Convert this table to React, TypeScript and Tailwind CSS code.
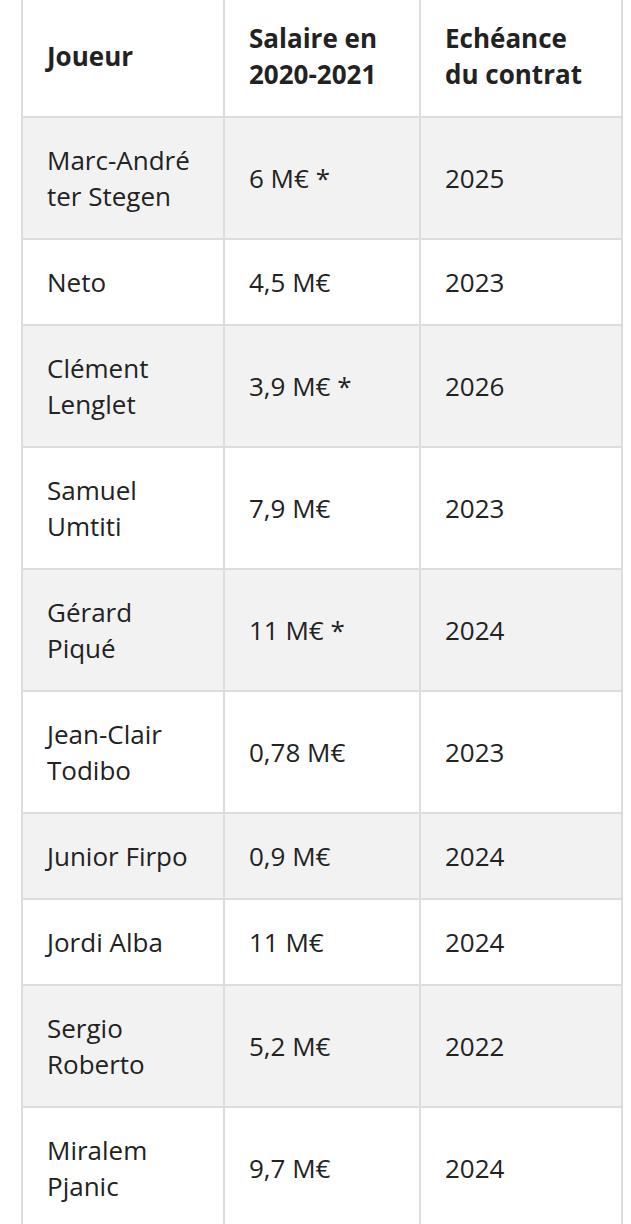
const rows: [string, string, string][] = [
  ["Marc-André ter Stegen", "6 M€ *", "2025"],
  ["Neto", "4,5 M€", "2023"],
  ["Clément Lenglet", "3,9 M€ *", "2026"],
  ["Samuel Umtiti", "7,9 M€", "2023"],
  ["Gérard Piqué", "11 M€ *", "2024"],
  ["Jean-Clair Todibo", "0,78 M€", "2023"],
  ["Junior Firpo", "0,9 M€", "2024"],
  ["Jordi Alba", "11 M€", "2024"],
  ["Sergio Roberto", "5,2 M€", "2022"],
  ["Miralem Pjanic", "9,7 M€", "2024"],
];

const cell = "border-l-2 border-t-2 border-[#dddddd] px-6 py-6 text-left align-middle";

export default function App() {
  return (
    <div className="min-h-screen bg-white overflow-hidden font-['Open_Sans',sans-serif] text-[26px] leading-[36px] text-[#222222]">
      {/* Salary table */}
      <table className="-mt-[6px] ml-[21px] w-[600px] table-fixed border-separate border-spacing-0 border-r-2 border-b-2 border-[#dddddd]">
        <colgroup>
          <col className="w-[202px]" />
          <col className="w-[196px]" />
          <col className="w-[202px]" />
        </colgroup>
        <thead>
          <tr className="bg-white">
            <th className={`${cell} font-bold`}>Joueur</th>
            <th className={`${cell} font-bold`}>Salaire en 2020-2021</th>
            <th className={`${cell} font-bold`}>Echéance du contrat</th>
          </tr>
        </thead>
        <tbody>
          {rows.map(([name, salary, end], i) => (
            <tr key={name} className={i % 2 === 0 ? "bg-[#f2f2f2]" : "bg-white"}>
              <td className={`${cell} font-normal`}>{name}</td>
              <td className={`${cell} font-normal`}>{salary}</td>
              <td className={`${cell} font-normal`}>{end}</td>
            </tr>
          ))}
        </tbody>
      </table>
    </div>
  );
}
